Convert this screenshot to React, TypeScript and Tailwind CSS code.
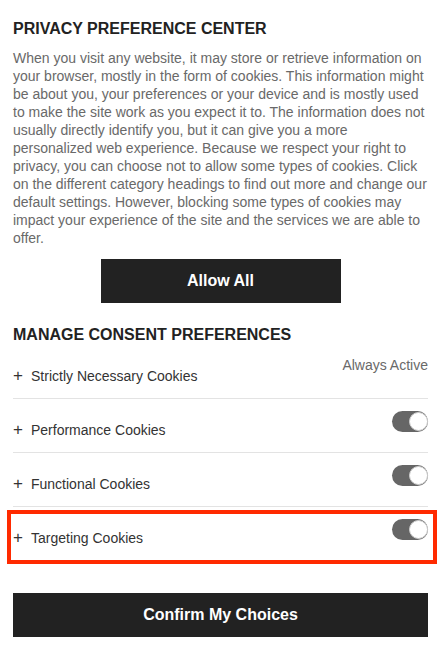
import React, { useState } from "react";

const categories = [
  { name: "Performance Cookies" },
  { name: "Functional Cookies" },
  { name: "Targeting Cookies", highlight: true },
];

const Toggle: React.FC<{ on: boolean; onClick: () => void }> = ({ on, onClick }) => (
  <button
    onClick={onClick}
    className={`relative w-[36px] h-[21px] rounded-full ${on ? "bg-[#666666]" : "bg-[#b3b3b3]"}`}
    aria-label="toggle"
  >
    <span
      className={`absolute top-[1px] w-[19px] h-[19px] rounded-full bg-white border border-[#cfcfcf] ${
        on ? "right-0" : "left-[1px]"
      }`}
    />
  </button>
);

export default function App() {
  const [state, setState] = useState<boolean[]>([true, true, true]);

  return (
    <div
      className="w-[440px] min-h-[657px] bg-white pl-[13px] pr-[12px] pt-[19px]"
      style={{ fontFamily: '"Liberation Sans", Arial, sans-serif' }}
    >
      <h2 className="text-[16px] leading-[20px] font-bold text-[#222222]">PRIVACY PREFERENCE CENTER</h2>
      <p className="mt-[10px] text-[14px] leading-[18px] text-[#696969]">
        When you visit any website, it may store or retrieve information on your browser, mostly in the form of
        cookies. This information might be about you, your preferences or your device and is mostly used to make the
        site work as you expect it to. The information does not usually directly identify you, but it can give you a
        more personalized web experience. Because we respect your right to privacy, you can choose not to allow some
        types of cookies. Click on the different category headings to find out more and change our default settings.
        However, blocking some types of cookies may impact your experience of the site and the services we are able to
        offer.
      </p>
      <div className="mt-[12px] flex justify-center">
        <button className="w-[240px] h-[44px] bg-[#222222] text-white text-[16px] font-bold">Allow All</button>
      </div>

      <h3 className="mt-[22px] text-[16px] leading-[20px] font-bold text-[#222222]">MANAGE CONSENT PREFERENCES</h3>

      <div className="flex justify-between items-start h-[54px] border-b border-[#e3e3e3]">
        <div className="mt-[21px] leading-[20px] text-[14px] text-[#333333] flex items-center">
          <span className="w-[18px] text-[17px] text-[#333333]">+</span>
          <span>Strictly Necessary Cookies</span>
        </div>
        <div className="mt-[10px] leading-[20px] text-[14px] text-[#696969]">Always Active</div>
      </div>

      {categories.map((c, i) => (
        <div
          key={c.name}
          className={`relative flex justify-between items-start h-[54px] ${c.highlight ? "" : "border-b border-[#e3e3e3]"}`}
        >
          <div className="mt-[21px] leading-[20px] text-[14px] text-[#333333] flex items-center">
            <span className="w-[18px] text-[17px] text-[#333333]">+</span>
            <span>{c.name}</span>
          </div>
          <div className="mt-[12px]">
            <Toggle
              on={state[i]}
              onClick={() => setState(state.map((v, j) => (j === i ? !v : v)))}
            />
          </div>
          {c.highlight && (
            <div className="absolute left-[-6px] right-[-9px] top-[3px] bottom-[-3px] border-[4px] border-[#ff2a00] pointer-events-none" />
          )}
        </div>
      ))}

      <button className="mt-[32px] w-full h-[44px] bg-[#222222] text-white text-[16px] font-bold">
        Confirm My Choices
      </button>
    </div>
  );
}
